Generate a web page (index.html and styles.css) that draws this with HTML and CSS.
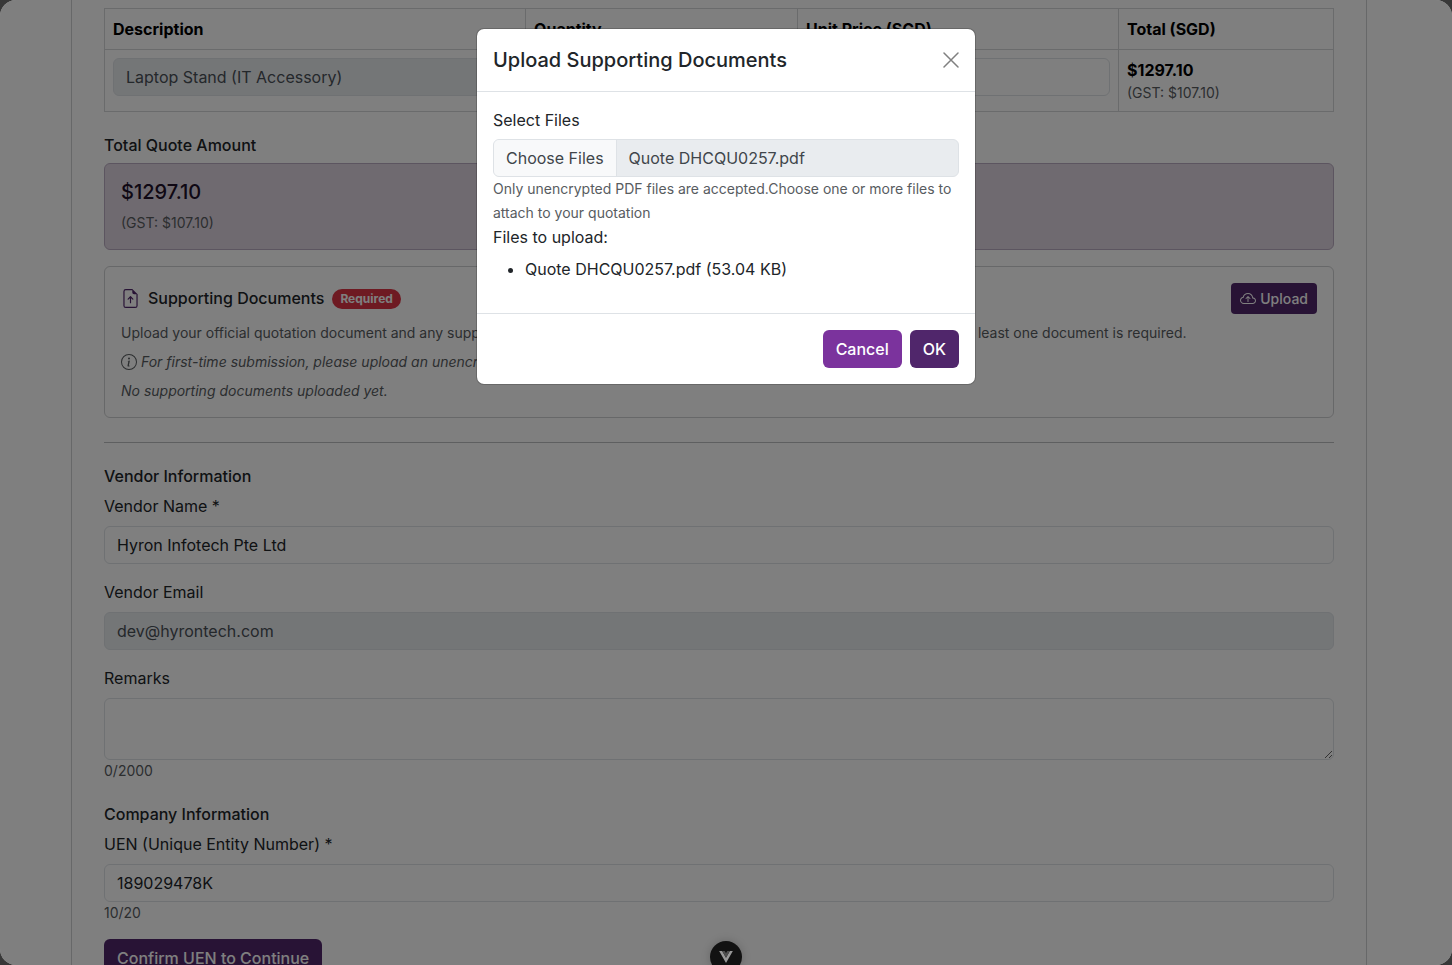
FILE: index.html
```html
<!DOCTYPE html>
<html lang="en">
<head>
    <meta charset="UTF-8">
    <meta name="viewport" content="width=device-width, initial-scale=1.0">
    <title>Submit Quotation</title>
    <link rel="stylesheet" href="styles.css">
</head>
<body>
    <div class="screen">
        <main class="quote-card">
            <table class="items">
                <thead>
                    <tr>
                        <th class="col-desc">Description</th>
                        <th class="col-qty">Quantity</th>
                        <th class="col-price">Unit Price (SGD)</th>
                        <th class="col-total">Total (SGD)</th>
                    </tr>
                </thead>
                <tbody>
                    <tr>
                        <td><input class="control" type="text" value="Laptop Stand (IT Accessory)" aria-label="Description" readonly></td>
                        <td><input class="control" type="text" value="10" aria-label="Quantity" readonly></td>
                        <td><input class="control" type="text" value="119" aria-label="Unit price"></td>
                        <td>
                            <strong>$1297.10</strong>
                            <div class="small">(GST: $107.10)</div>
                        </td>
                    </tr>
                </tbody>
            </table>

            <h2 class="heading">Total Quote Amount</h2>
            <div class="total-box">
                <p class="amount">$1297.10</p>
                <p class="small">(GST: $107.10)</p>
            </div>

            <section class="docs">
                <div class="docs-head">
                    <h2 class="docs-title">
                        <svg class="icon-file" viewBox="0 0 16 16" fill="currentColor">
                            <path d="M8.5 11.5a.5.5 0 0 1-1 0V7.707L6.354 8.854a.5.5 0 1 1-.708-.708l2-2a.5.5 0 0 1 .708 0l2 2a.5.5 0 0 1-.708.708L8.5 7.707z"/>
                            <path d="M14 14V4.5L9.5 0H4a2 2 0 0 0-2 2v12a2 2 0 0 0 2 2h8a2 2 0 0 0 2-2M9.5 3A1.5 1.5 0 0 0 11 4.5h2V14a1 1 0 0 1-1 1H4a1 1 0 0 1-1-1V2a1 1 0 0 1 1-1h5.5z"/>
                        </svg>
                        <span>Supporting Documents</span>
                        <span class="badge">Required</span>
                    </h2>
                    <button class="btn btn-sm btn-primary" type="button">
                        <svg class="icon-cloud" viewBox="0 0 16 16" fill="currentColor">
                            <path fill-rule="evenodd" d="M7.646 5.146a.5.5 0 0 1 .708 0l2 2a.5.5 0 0 1-.708.708L8.5 6.707V10.500a.5.5 0 0 1-1 0V6.707L6.354 7.854a.5.5 0 1 1-.708-.708z"/>
                            <path d="M4.406 3.342A5.530 5.530 0 0 1 8 2c2.690 0 4.923 2 5.166 4.579C14.758 6.804 16 8.137 16 9.773 16 11.569 14.502 13 12.687 13H3.781C1.708 13 0 11.366 0 9.318c0-1.763 1.266-3.223 2.942-3.593.143-.863.698-1.723 1.464-2.383m.653.757c-.757.653-1.153 1.440-1.153 2.056v.448l-.445.049C2.064 6.805 1 7.952 1 9.318 1 10.785 2.230 12 3.781 12h8.906C13.980 12 15 10.988 15 9.773c0-1.216-1.020-2.228-2.313-2.228h-.5v-.5C12.188 4.825 10.328 3 8 3a4.530 4.530 0 0 0-2.941 1.100z"/>
                        </svg>
                        Upload
                    </button>
                </div>
                <p class="small">Upload your official quotation document and any supporting files (e.g., company brochures, specifications, and certifications). At least one document is required.</p>
                <p class="small note">
                    <svg class="icon-info" viewBox="0 0 16 16" fill="currentColor">
                        <path d="M8 15A7 7 0 1 1 8 1a7 7 0 0 1 0 14m0 1A8 8 0 1 0 8 0a8 8 0 0 0 0 16"/>
                        <path d="m8.930 6.588-2.290.287-.082.380.450.083c.294.070.352.176.288.469l-.738 3.468c-.194.897.105 1.319.808 1.319.545 0 1.178-.252 1.465-.598l.088-.416c-.2.176-.492.246-.686.246-.275 0-.375-.193-.304-.533zM9 4.500a1 1 0 1 1-2 0 1 1 0 0 1 2 0"/>
                    </svg>
                    <span>For first-time submission, please upload an unencrypted PDF file.</span>
                </p>
                <p class="small note">No supporting documents uploaded yet.</p>
            </section>

            <hr class="divider">

            <form>
                <h2 class="heading">Vendor Information</h2>
                <div class="field">
                    <label for="vendor-name">Vendor Name *</label>
                    <input class="control" id="vendor-name" type="text" value="Hyron Infotech Pte Ltd">
                </div>
                <div class="field">
                    <label for="vendor-email">Vendor Email</label>
                    <input class="control" id="vendor-email" type="email" value="dev@hyrontech.com" readonly>
                </div>
                <div class="field field-last">
                    <label for="remarks">Remarks</label>
                    <textarea class="control" id="remarks" rows="2"></textarea>
                    <div class="small">0/2000</div>
                </div>

                <h2 class="heading">Company Information</h2>
                <div class="field">
                    <label for="uen">UEN (Unique Entity Number) *</label>
                    <input class="control" id="uen" type="text" value="189029478K">
                    <div class="small">10/20</div>
                </div>
                <button class="btn btn-primary" type="button">Confirm UEN to Continue</button>
            </form>
        </main>

        <div class="backdrop">
            <div class="modal" role="dialog" aria-modal="true" aria-labelledby="modal-title">
                <div class="modal-header">
                    <h1 class="modal-title" id="modal-title">Upload Supporting Documents</h1>
                    <button class="close" type="button" aria-label="Close">
                        <svg viewBox="0 0 16 16" fill="none" stroke="currentColor" stroke-width="1.5" stroke-linecap="round">
                            <path d="M1 1l14 14M15 1L1 15"/>
                        </svg>
                    </button>
                </div>
                <div class="modal-body">
                    <label for="files">Select Files</label>
                    <input class="control file" id="files" type="file" accept="application/pdf" multiple disabled>
                    <p class="help">Only unencrypted PDF files are accepted.Choose one or more files to attach to your quotation</p>
                    <p class="list-title">Files to upload:</p>
                    <ul class="file-list">
                        <li>Quote DHCQU0257.pdf (53.04 KB)</li>
                    </ul>
                </div>
                <div class="modal-footer">
                    <button class="btn btn-secondary" type="button">Cancel</button>
                    <button class="btn btn-primary" type="button">OK</button>
                </div>
            </div>
        </div>

        <button class="devtools" type="button" aria-label="Toggle devtools">
            <svg viewBox="0 0 16 14">
                <path fill="#989898" d="M0 0h3.500L8 8l4.500-8H16L8 14z"/>
                <path fill="#505050" d="M3.500 0h3L8 2.700 9.500 0h3L8 8z"/>
            </svg>
        </button>
    </div>

    <script>
        // keep the chosen quotation in the file picker
        let picked = new DataTransfer();
        picked.items.add(new File([""], "Quote DHCQU0257.pdf", { type: "application/pdf" }));
        document.querySelector("#files").files = picked.files;
    </script>
</body>
</html>
```
FILE: styles.css
```css
* {
    box-sizing: border-box;
}
html {
    background-color: #383838;
}
body {
    margin: 0;
    font-family: Inter, "Liberation Sans", sans-serif;
    font-size: 16px;
    line-height: 24px;
    color: #212529;
}
h1, h2, p {
    margin: 0;
    font-weight: 500;
}
p {
    font-weight: 400;
}
button, input, textarea {
    font: inherit;
}
.screen {
    position: relative;
    height: 100vh;
    overflow: hidden;
    padding: 0 14px 0 0;
    border-radius: 16px;
    background-color: #fff;
}
.quote-card {
    max-width: 1296px;
    margin: 0 auto;
    padding: 8px 32px 32px;
    border: 1px solid #cfd0d2;
    border-top: 0;
}
.small {
    font-size: 14px;
    line-height: 21px;
    color: #585c5f;
}

/* line items */
.items {
    width: 100%;
    margin-bottom: 24px;
    table-layout: fixed;
    border-collapse: collapse;
    color: #000;
}
.items th, .items td {
    padding: 8px;
    border: 1px solid #d5d7d9;
    text-align: left;
    vertical-align: top;
}
.items th {
    font-weight: 700;
}
.items strong {
    display: block;
}
.col-desc { width: 421px; }
.col-qty { width: 272px; }
.col-price { width: 321px; }
.col-total { width: 215px; }

/* form controls */
.control {
    display: block;
    width: 100%;
    height: 38px;
    padding: 6px 12px;
    border: 1px solid #dee2e6;
    border-radius: 6px;
    background-color: #fff;
    color: #212529;
}
.control[readonly] {
    background-color: #e9ecef;
    color: #495057;
}
textarea.control {
    height: 62px;
    resize: vertical;
}
.heading {
    margin-bottom: 8px;
    font-size: 16px;
    line-height: 19px;
}
.field {
    margin-bottom: 16px;
}
.field-last {
    margin-bottom: 24px;
}
.field label {
    display: block;
    margin-bottom: 8px;
}
.divider {
    margin: 24px 0;
    border: 0;
    border-top: 1px solid #bcbec0;
}

.total-box {
    margin-bottom: 16px;
    padding: 16px;
    border: 1px solid #b9abc0;
    border-radius: 6px;
    background-color: #dfd5e1;
}
.amount {
    margin-bottom: 8px;
    font-size: 20px;
    font-weight: 500;
    line-height: 24px;
    color: #201029;
}

/* supporting documents */
.docs {
    padding: 16px;
    border: 1px solid #cfd0d2;
    border-radius: 6px;
}
.docs .small + .small {
    margin-top: 8px;
}
.docs-head {
    display: flex;
    align-items: center;
    justify-content: space-between;
    margin-bottom: 8px;
}
.docs-title {
    display: flex;
    align-items: center;
    gap: 8px;
    font-size: 16px;
    line-height: 19px;
}
.icon-file {
    width: 19px;
    height: 19px;
    color: #50266b;
}
.badge {
    padding: 4px 8px;
    border-radius: 10px;
    background-color: #dc3545;
    color: #fff;
    font-size: 12px;
    font-weight: 700;
    line-height: 12px;
}
.note {
    display: flex;
    align-items: center;
    gap: 4px;
    font-style: italic;
}
.icon-info {
    width: 16px;
    height: 16px;
}

/* buttons */
.btn {
    height: 38px;
    padding: 6px 12px;
    border: 1px solid transparent;
    border-radius: 6px;
    color: #fff;
    font-weight: 500;
}
.btn-sm {
    display: flex;
    align-items: center;
    gap: 4px;
    height: 31px;
    padding: 4px 8px;
    border-radius: 4px;
    font-size: 14px;
    line-height: 21px;
}
.icon-cloud {
    width: 16px;
    height: 16px;
}
.btn-primary {
    background-color: #50266b;
}
.btn-secondary {
    background-color: #7b339d;
}

/* modal */
.backdrop {
    position: absolute;
    inset: 0;
    padding: 28px;
    background-color: rgba(0, 0, 0, .5);
}
.modal {
    max-width: 500px;
    margin: 0 auto;
    border: 1px solid rgba(0, 0, 0, .18);
    border-radius: 8px;
    background-color: #fff;
    background-clip: padding-box;
}
.modal-header {
    display: flex;
    align-items: center;
    justify-content: space-between;
    padding: 16px;
    border-bottom: 1px solid #dee2e6;
}
.modal-title {
    font-size: 20px;
    line-height: 30px;
}
.close {
    display: flex;
    padding: 0;
    border: 0;
    background: none;
    color: #808080;
}
.close svg {
    width: 16px;
    height: 16px;
}
.modal-body {
    padding: 16px;
}
.modal-body label {
    display: block;
    margin-bottom: 7px;
}
.file {
    overflow: hidden;
    background-color: #e9ecef;
    color: #40454a;
}
.file::file-selector-button {
    margin: -6px 12px -6px -12px;
    padding: 6px 12px;
    border: 0;
    border-right: 1px solid #dee2e6;
    background-color: #f8f9fa;
    color: #40454a;
    font: inherit;
}
.help {
    font-size: 14px;
    color: #585c5f;
}
.list-title {
    margin-bottom: 8px;
}
.file-list {
    margin: 0 0 16px;
    padding-left: 32px;
}
.modal-footer {
    display: flex;
    justify-content: flex-end;
    gap: 8px;
    padding: 16px;
    border-top: 1px solid #dee2e6;
}

.devtools {
    position: absolute;
    bottom: -8px;
    left: calc(50% - 16px);
    display: flex;
    align-items: center;
    justify-content: center;
    width: 32px;
    height: 32px;
    padding: 0;
    border: 0;
    border-radius: 50%;
    background-color: #121212;
    box-shadow: 0 0 10px rgba(0, 0, 0, .2);
}
.devtools svg {
    width: 14px;
    height: 12px;
}
```
